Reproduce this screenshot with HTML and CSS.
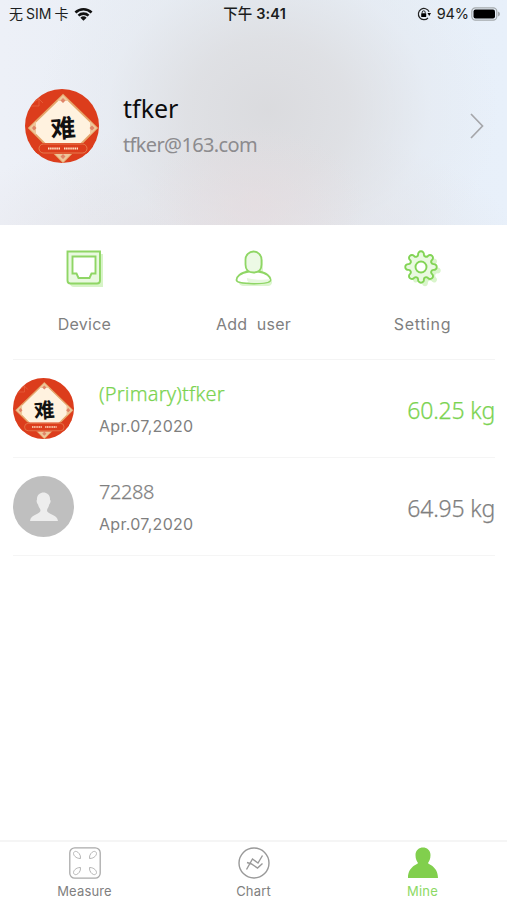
FILE: index.html
```html
<!DOCTYPE html>
<html lang="en">
<head>
<meta charset="utf-8">
<title>Mine</title>
<link rel="stylesheet" href="styles.css">
</head>
<body>
<svg width="0" height="0" class="defs">
  <defs>
    <symbol id="avatar" viewBox="0 0 74 74">
      <clipPath id="disc"><circle cx="37" cy="37" r="37"/></clipPath>
      <g clip-path="url(#disc)">
        <path fill="#dc3d1c" d="M0 0h74v74H0z"/>
        <path fill="none" stroke="#e86a45" stroke-width=".7" d="M5 17h9V9M9 13l5-3 4 4"/>
        <path fill="#fff2df" stroke="#e5a66c" stroke-width="1.8" d="M38 6 72 39 38 73 4 39z"/>
        <path fill="#eec79b" d="m38 6 6 6H32zM4 39l7-7v14zM72 39l-7-7v14zM38 73 29 64h18z"/>
        <path fill="#e08468" d="m38 9 2.500 2.500L38 14l-2.500-2.500zM9 36.500l2.500 2.500L9 41.500 7 39zM67 36.500l2.500 2.500-2.500 2.500-2.500-2.500zM38 65l2.500 2.500L38 70l-2.500-2.500z"/>
        <path fill="#dc3d1c" d="M8 54h60v11H48l-4 0H32L28 65H8z"/>
        <rect x="14" y="55" width="48" height="9" rx="4.500" fill="#dc3d1c" stroke="#e78b5b" stroke-width=".8"/>
        <path stroke="#ffe1c4" stroke-width="2" stroke-dasharray="1.500 .6" d="M23 59.500h12M39 59.500h14"/>
        <text x="38" y="48.500" text-anchor="middle" class="glyph" transform="rotate(-4 37 39)">难</text>
      </g>
    </symbol>
    <path id="gear" d="M12.370-2.860A2.900 2.900 0 1 1 12.370 2.860A2.300 2.300 0 0 0 10.770 6.730A2.900 2.900 0 1 1 6.730 10.770A2.300 2.300 0 0 0 2.860 12.370A2.900 2.900 0 1 1-2.860 12.370A2.300 2.300 0 0 0-6.730 10.770A2.900 2.900 0 1 1-10.770 6.730A2.300 2.300 0 0 0-12.370 2.860A2.900 2.900 0 1 1-12.370-2.860A2.300 2.300 0 0 0-10.770-6.730A2.900 2.900 0 1 1-6.730-10.770A2.300 2.300 0 0 0-2.860-12.370A2.900 2.900 0 1 1 2.860-12.370A2.300 2.300 0 0 0 6.730-10.770A2.900 2.900 0 1 1 10.770-6.730A2.300 2.300 0 0 0 12.370-2.860z"/>
  </defs>
</svg>
<header class="hero">
  <div class="status">
    <div class="carrier"><span class="nosim">无<span class="sim">SIM</span>卡</span>
      <svg width="19" height="15" viewBox="0 0 20 15"><g fill="none" stroke="#111" stroke-width="2.700"><path d="M1.500 5.400a12.300 12.300 0 0 1 17 0M4.700 8.700a7.700 7.700 0 0 1 10.600 0"/></g><path fill="#111" d="M6.700 10.800a4.800 4.800 0 0 1 6.600 0L10 14.200z"/></svg>
    </div>
    <div class="time">下午 <b>3:41</b></div>
    <div class="power">
      <svg width="14" height="14" viewBox="0 0 14 14"><path fill="none" stroke="#222" stroke-width="1.200" d="M12.100 4.800A5.600 5.600 0 1 0 11 11"/><path d="M10.500 6H14l-1.800 3z"/><rect x="4.200" y="6.200" width="5" height="3.800" rx=".5"/><path fill="none" stroke="#222" d="M5.200 6.500V5.300a1.500 1.500 0 0 1 3 0v1.200"/></svg>
      <span class="pct">94%</span>
      <svg width="29" height="14" viewBox="0 0 29 14"><rect x=".8" y=".8" width="25" height="12.400" rx="3.600" fill="none" stroke="#a4a9ac" stroke-width="1.200"/><rect x="2.500" y="2.500" width="21.500" height="9" rx="2"/><path fill="#a4a9ac" d="M27 4.500q2 .8 2 2.500t-2 2.500z"/></svg>
    </div>
  </div>
  <div class="profile">
    <svg class="face-lg"><use href="#avatar"/></svg>
    <div class="ident"><div class="name">tfker</div><div class="mail">tfker@163.com</div></div>
    <svg class="chev" width="14" height="26" viewBox="0 0 14 26"><path d="m1 1 11.500 12L1 25" fill="none" stroke="#a5a6aa" stroke-width="1.700"/></svg>
  </div>
</header>
<main>
  <nav class="actions">
    <a><svg width="44" height="40" viewBox="0 0 44 40"><path fill="#d7f4c7" d="M7 5h33v33H11q-4 0-4-4z"/><path fill="#e9f9e0" stroke="#8fd665" stroke-width="1.900" d="M4.500 2.500H37v29q0 3-3 3H7.500q-3 0-3-3z"/><path fill="#fff" stroke="#8fd665" stroke-width="1.900" d="M9.500 7.500h23v17H28.500l-2 4.500h-11l-2-4.500h-4z"/></svg><span class="dev">Device</span></a>
    <a><svg width="44" height="40" viewBox="0 0 44 40"><path fill="#dcf5cf" d="M20 11q5-7 11 0v12q10 3 9 11-1 3-4 3H11q-5-1-4-5z"/><path fill="#fff" stroke="#8fd665" stroke-width="1.800" d="M17 22.500C8 23.500 4.500 28 4.500 31c0 2.500 6 3.500 17 3.500s17-1 17-3.500c0-3-3.500-7.500-12.500-8.500"/><path fill="#e6f8dd" d="M15 29q14 3 23 1 1 4-16 4-8 0-7-5z"/><path fill="#ecf9e5" stroke="#8fd665" stroke-width="1.800" d="M13.500 10.500a8 8 0 0 1 16 0v5q0 8-8 8t-8-8z"/></svg><span class="add">Add&nbsp; user</span></a>
    <a><svg width="44" height="40" viewBox="0 0 44 40"><use href="#gear" fill="#d9f5cb" transform="translate(24 21.500)"/><use href="#gear" fill="#e9f9e1" stroke="#82d455" stroke-width="1.900" transform="translate(20 18)"/><circle cx="20" cy="18" r="5.500" fill="#fff" stroke="#82d455" stroke-width="1.900"/></svg><span class="set">Setting</span></a>
  </nav>
  <section class="users">
    <div class="row primary"><svg class="face"><use href="#avatar"/></svg><div class="who"><div class="user">(Primary)tfker</div><div class="date">Apr.07,2020</div></div><div class="kg">60.25 kg</div></div>
    <div class="row"><svg class="face" viewBox="0 0 61 61"><circle cx="30.500" cy="30.500" r="30.500" fill="#bfbfbf"/><path fill="#ededed" d="M24 24c-1-10 14-10 13 0 1.500 0 0 4-.8 4.500-.4 3-2.200 4-2.200 6 0 4 10.500 3.500 11 10.500H17c.5-7 10.500-6.500 10.500-10.500 0-2-2-3-2.500-6-1-.5-2-4.500-1-4.500z"/></svg><div class="who"><div class="user num">72288</div><div class="date">Apr.07,2020</div></div><div class="kg">64.95 kg</div></div>
  </section>
</main>
<footer class="tabs">
  <a><svg width="32" height="32" viewBox="0 0 32 32" fill="none" stroke="#aaa"><rect x=".8" y=".8" width="30.400" height="30.400" rx="5" stroke-width="1.300"/><path stroke="#b5b5b5" d="M11.500 11.500C6.500 11.500 4.500 8 4.500 6.500S6 4 7.500 4.500s4.500 3 4 7zM20.500 11.500c5 0 7-3.500 7-5S26 4 24.500 4.500s-4.500 3-4 7zM11.500 20.500c-5 0-7 3.500-7 5s1.500 2.500 3 2 4.500-3 4-7zM20.500 20.500c5 0 7 3.500 7 5s-1.500 2.500-3 2-4.500-3-4-7z"/></svg><span class="t1">Measure</span></a>
  <a><svg width="32" height="32" viewBox="0 0 32 32" fill="none" stroke="#999" stroke-width="1.400"><circle cx="16" cy="16" r="15"/><path d="M8.500 22.500 14.500 12l5.500 4 4.500-7.500M9 15.500l4.500 1.500 6 4 5-4.500"/></svg><span class="t2">Chart</span></a>
  <a class="on"><svg width="32" height="32" viewBox="0 0 32 32"><path fill="#81cf4d" d="M8.500 8c0-10 15-10 15 0 0 4-1.200 6-2.500 8 0 1.500 10 3 10 15H1c0-12 10-13.500 10-15-1.300-2-2.500-4-2.500-8z"/></svg><span class="t3">Mine</span></a>
</footer>
</body>
</html>
```
FILE: styles.css
```css
* { box-sizing: border-box; }
body {
  margin: 0;
  height: 900px;
  display: flex;
  flex-direction: column;
  overflow: hidden;
  background: #fff;
  color: #7f7f7f;
  font-family: Inter, "Noto Sans CJK SC", sans-serif;
}
svg { display: block; flex: none; }
span, .name, .mail, .user, .date, .kg { white-space: nowrap; }
.defs { position: absolute; }
.glyph { font: 700 25px "Noto Sans CJK SC", sans-serif; fill: #111; }
.hero {
  height: 225px;
  background:
    radial-gradient(ellipse 110px 80px at 255px 205px, rgba(232, 219, 222, .5), transparent),
    radial-gradient(ellipse 230px 200px at 268px 110px, rgba(218, 218, 221, .95) 0%, rgba(221, 221, 224, .8) 35%, rgba(228, 230, 235, .35) 70%, transparent 100%),
    radial-gradient(ellipse 290px 130px at 230px 250px, rgba(226, 222, 225, .9), transparent),
    linear-gradient(90deg, #edf0f7, #e5edf5 50%, #e8f0fa);
}
.status {
  height: 28px;
  padding: 0 7px 0 9px;
  display: grid;
  grid-template-columns: 1fr auto 1fr;
  align-items: center;
  color: #1b1d20;
  font-size: 14px;
  line-height: 28px;
}
.carrier, .power { display: flex; align-items: center; }
.carrier { gap: 6px; }
.sim { margin: 0 3px; }
.time { font-weight: 500; font-size: 14.500px; letter-spacing: .1px; }
.time b { font-weight: 600; }
.power { justify-content: flex-end; }
.pct { margin: 0 2px 0 6px; font-size: 14.500px; letter-spacing: -.1px; }
.profile { display: flex; align-items: center; padding: 61px 23px 0 25px; }
.face-lg { width: 74px; height: 74px; }
.ident { margin-left: 24px; flex: 1; font-family: "Noto Sans", sans-serif; }
.name { font-size: 25px; line-height: 36px; color: #0c0c0e; }
.mail { font-size: 20px; line-height: 36px; letter-spacing: -.65px; color: #8c8b8e; position: relative; top: 1px; }
.actions { height: 134px; display: grid; grid-template-columns: repeat(3, 1fr); padding-top: 24px; }
.actions a { display: flex; flex-direction: column; align-items: center; gap: 25px; }
.actions span { font-size: 16px; line-height: 20px; letter-spacing: .25px; }
.actions .set { letter-spacing: .65px; }
.users { margin: 0 12px 0 13px; border-top: 1px solid #f4f4f4; }
.row { height: 98px; display: flex; align-items: center; border-bottom: 1px solid #f5f5f5; }
.face { width: 61px; height: 61px; }
.who { margin-left: 25px; padding-top: 3px; flex: 1; }
.user { font: 300 20px/33px "Noto Sans", sans-serif; -webkit-text-stroke: .25px; letter-spacing: .2px; }
.num { letter-spacing: -.45px; }
.date { font-size: 16px; line-height: 33px; letter-spacing: .3px; }
.kg { font: 300 23px/33px "Noto Sans", sans-serif; -webkit-text-stroke: .25px; letter-spacing: -.2px; padding-top: 3px; }
.primary .user, .primary .kg { color: #7bd351; }
.tabs {
  margin-top: auto;
  height: 60px;
  border-top: 2px solid #f5f5f5;
  padding-top: 5px;
  display: grid;
  grid-template-columns: repeat(3, 1fr);
}
.tabs a { display: flex; flex-direction: column; align-items: center; gap: 4px; }
.tabs span { font-size: 13px; line-height: 16px; letter-spacing: .15px; }
.tabs .on { color: #8cd964; }
```
